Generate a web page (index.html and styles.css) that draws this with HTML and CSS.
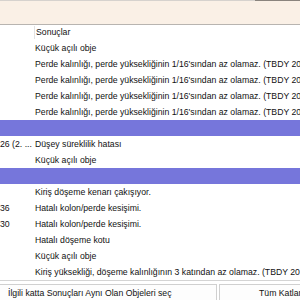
FILE: index.html
```html
<!DOCTYPE html>
<html>
<head>
  <title>Sonuçlar</title>
  <link rel="stylesheet" href="styles.css">
</head>
<body>
  <div class="window">
    <div class="top-line"><span class="top-line-dark"></span></div>
    <div class="filter-panel"></div>

    <div class="grid">
      <div class="grid-head">
        <div class="cell key"></div>
        <div class="cell msg">Sonuçlar</div>
      </div>
      <div class="row"><div class="cell key"></div><div class="cell msg">Küçük açılı obje</div></div>
      <div class="row"><div class="cell key"></div><div class="cell msg">Perde kalınlığı, perde yüksekliğinin 1/16'sından az olamaz. (TBDY 2018)</div></div>
      <div class="row"><div class="cell key"></div><div class="cell msg">Perde kalınlığı, perde yüksekliğinin 1/16'sından az olamaz. (TBDY 2018)</div></div>
      <div class="row"><div class="cell key"></div><div class="cell msg">Perde kalınlığı, perde yüksekliğinin 1/16'sından az olamaz. (TBDY 2018)</div></div>
      <div class="row"><div class="cell key"></div><div class="cell msg">Perde kalınlığı, perde yüksekliğinin 1/16'sından az olamaz. (TBDY 2018)</div></div>
      <div class="row group"><div class="cell key"></div><div class="cell msg"></div></div>
      <div class="row"><div class="cell key">26 (2. ...</div><div class="cell msg">Düşey süreklilik hatası</div></div>
      <div class="row"><div class="cell key"></div><div class="cell msg">Küçük açılı obje</div></div>
      <div class="row group"><div class="cell key"></div><div class="cell msg"></div></div>
      <div class="row"><div class="cell key"></div><div class="cell msg">Kiriş döşeme kenarı çakışıyor.</div></div>
      <div class="row"><div class="cell key">36</div><div class="cell msg">Hatalı kolon/perde kesişimi.</div></div>
      <div class="row"><div class="cell key">30</div><div class="cell msg">Hatalı kolon/perde kesişimi.</div></div>
      <div class="row"><div class="cell key"></div><div class="cell msg">Hatalı döşeme kotu</div></div>
      <div class="row"><div class="cell key"></div><div class="cell msg">Küçük açılı obje</div></div>
      <div class="row"><div class="cell key"></div><div class="cell msg">Kiriş yüksekliği, döşeme kalınlığının 3 katından az olamaz. (TBDY 2018)</div></div>
    </div>

    <div class="actions">
      <button class="btn btn-select">İlgili katta Sonuçları Aynı Olan Objeleri seç</button>
      <button class="btn btn-all">Tüm Katlarda Sonuçları Aynı Olan Objeleri seç</button>
    </div>
  </div>
</body>
</html>
```

FILE: styles.css
```css
body {
  margin: 0;
  background: #fff;
  font-family: "Liberation Sans", Arial, sans-serif;
  font-size: 8.7px;
  color: #111;
}
.window {
  width: 300px;
  height: 300px;
  overflow: hidden;
  display: flex;
  flex-direction: column;
}
.top-line {
  height: 1px;
  background: #d6d2ce;
  display: flex;
  justify-content: flex-end;
}
.top-line-dark {
  width: 45px;
  background: #8a847e;
}
.filter-panel {
  height: 24px;
  background: #faf0e6;
  border-bottom: 1px solid #b8b4b0;
}
.grid {
  display: flex;
  flex-direction: column;
}
.grid-head,
.row {
  display: flex;
  white-space: nowrap;
}
.grid-head {
  height: 15px;
  line-height: 15px;
}
.grid-head .key {
  border-right: 1px solid #e2e2e2;
  margin: 1px 0;
}
.row {
  height: 16px;
  line-height: 16px;
}
.row.group {
  background: #7676db;
}
.cell {
  overflow: hidden;
}
.key {
  width: 34px;
  flex: none;
}
.msg {
  flex: 1;
  padding-left: 1px;
}
.grid-head .msg {
  padding-left: 1px;
}
.actions {
  flex: 1;
  display: flex;
  border-top: 1px solid #d4d4d4;
  margin-top: 0;
  padding-top: 3px;
}
.btn {
  font-family: inherit;
  font-size: 8.7px;
  color: #111;
  background: #fdfdfd;
  border: 1px solid #d0d0d0;
  border-bottom: none;
  text-align: left;
  white-space: nowrap;
  overflow: hidden;
  padding: 0;
  height: 16px;
  line-height: 14px;
  margin-top: auto;
}
.btn-select {
  width: 217px;
  border-left: none;
  padding-left: 8px;
}
.btn-all {
  flex: 1;
  margin-left: 2px;
  padding-left: 39px;
  border-right: none;
}
```
